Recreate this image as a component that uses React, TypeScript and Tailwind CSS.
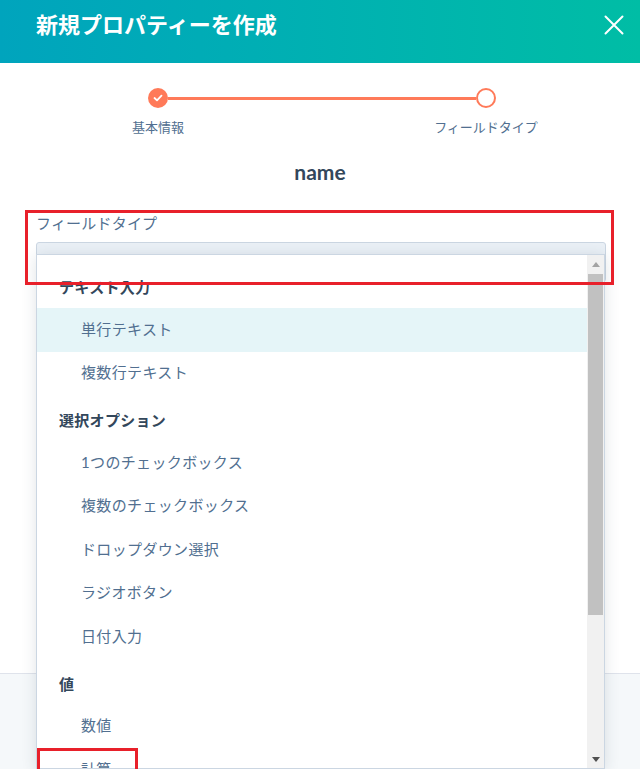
import React from "react";

const FONT = { fontFamily: 'Lato, "Noto Sans CJK JP", "Noto Sans", sans-serif' };

type Row = { kind: "header" | "item"; label: string; active?: boolean };

const rows: Row[] = [
  { kind: "header", label: "テキスト入力" },
  { kind: "item", label: "単行テキスト", active: true },
  { kind: "item", label: "複数行テキスト" },
  { kind: "header", label: "選択オプション" },
  { kind: "item", label: "1つのチェックボックス" },
  { kind: "item", label: "複数のチェックボックス" },
  { kind: "item", label: "ドロップダウン選択" },
  { kind: "item", label: "ラジオボタン" },
  { kind: "item", label: "日付入力" },
  { kind: "header", label: "値" },
  { kind: "item", label: "数値" },
  { kind: "item", label: "計算" },
];

export default function App() {
  return (
    <div className="relative w-[640px] h-[769px] overflow-hidden bg-white flex flex-col" style={FONT}>
      {/* Header */}
      <div className="h-[63px] shrink-0 bg-linear-to-r from-[#00a4bd] to-[#00bda5] flex items-start justify-between pl-[36px] pr-[16px] pt-[11px]">
        <h1 className="text-[22px] leading-[28px] font-bold text-white">新規プロパティーを作成</h1>
        <svg width="20" height="20" viewBox="0 0 20 20" className="mt-[4px]">
          <path d="M1.5 1.5 L18.5 18.5 M18.5 1.5 L1.5 18.5" stroke="white" strokeWidth="2" strokeLinecap="round" />
        </svg>
      </div>

      {/* Body */}
      <div className="h-[610px] shrink-0 bg-white pt-[25px] pl-[36px] pr-[34px]">
        {/* Stepper */}
        <div className="ml-[112px] w-[348px] flex items-center">
          <div className="w-[20px] h-[20px] rounded-full bg-[#ff7a59] flex items-center justify-center">
            <svg width="10" height="8" viewBox="0 0 10 8">
              <path d="M1.5 4 L4 6.3 L8.5 1.7" stroke="white" strokeWidth="1.8" fill="none" strokeLinecap="round" strokeLinejoin="round" />
            </svg>
          </div>
          <div className="flex-1 h-[3px] bg-[#ff7a59]" />
          <div className="w-[20px] h-[20px] rounded-full border-2 border-[#ff7a59] bg-white" />
        </div>
        <div className="ml-[62px] w-[448px] flex justify-between mt-[10px]">
          <div className="w-[120px] text-center text-[13px] leading-[18px] text-[#516f90]">基本情報</div>
          <div className="w-[120px] text-center text-[13px] leading-[18px] text-[#516f90]">フィールドタイプ</div>
        </div>

        {/* Name */}
        <div className="mt-[22px] text-center text-[21px] leading-[28px] font-bold text-[#33475b] pr-[2px]">name</div>

        {/* Field */}
        <div className="mt-[26px] text-[15px] leading-[22px] text-[#516f90] tracking-[0.2px]">フィールドタイプ</div>
        <div className="relative mt-[8px]">
          <div className="h-[40px] rounded-[3px] border border-[#cbd6e2] bg-[#eaf0f6]" />
          {/* Dropdown */}
          <div className="absolute left-0 right-[1px] top-[12px] h-[515px] bg-white border border-[#cbd6e2] shadow-[0_2px_14px_rgba(45,62,80,0.14)] flex">
            <div className="flex-1 pt-[7px] overflow-hidden">
              {rows.map((r, i) =>
                r.kind === "header" ? (
                  <div key={i} className="h-[46px] pt-[14px] pl-[22px] text-[15px] leading-[22px] font-bold text-[#33475b] tracking-[0.3px]">
                    {r.label}
                  </div>
                ) : (
                  <div
                    key={i}
                    className={`h-[43.5px] flex items-center pl-[44px] pb-[2px] text-[15px] leading-[22px] text-[#516f90] tracking-[0.35px] ${r.active ? "bg-[#e5f5f8]" : ""}`}
                  >
                    {r.label}
                  </div>
                )
              )}
            </div>
            {/* Scrollbar */}
            <div className="w-[17px] bg-[#f1f1f1] flex flex-col">
              <div className="h-[18px] flex items-center justify-center">
                <svg width="8" height="5" viewBox="0 0 8 5"><path d="M0 5 L4 0 L8 5 Z" fill="#a3a3a3" /></svg>
              </div>
              <div className="mx-[1px] mt-[1px] h-[341px] bg-[#c1c1c1]" />
              <div className="flex-1" />
              <div className="h-[17px] flex items-center justify-center">
                <svg width="8" height="5" viewBox="0 0 8 5"><path d="M0 0 L8 0 L4 5 Z" fill="#505050" /></svg>
              </div>
            </div>
          </div>
        </div>
      </div>

      {/* Footer */}
      <div className="flex-1 bg-[#f5f8fa] border-t border-[#dfe3eb]" />

      {/* Annotation boxes */}
      <div className="absolute left-[25px] top-[210px] w-[589px] h-[75px] border-[3px] border-[#e8202a] pointer-events-none" />
      <div className="absolute left-[37px] top-[748px] w-[101px] h-[40px] border-[3px] border-[#e8202a] pointer-events-none" />
    </div>
  );
}
